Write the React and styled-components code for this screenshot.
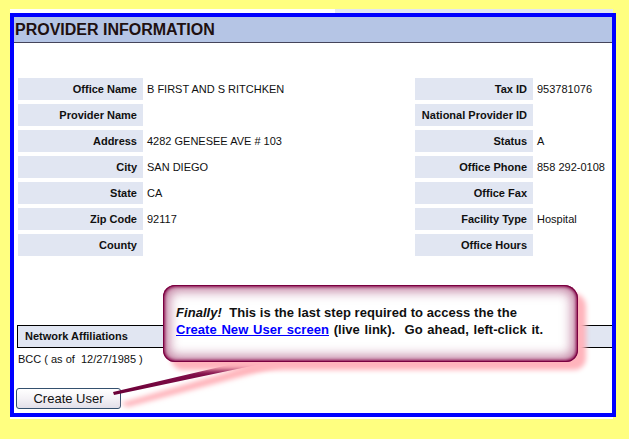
import React from "react";
import styled, { createGlobalStyle } from "styled-components";

const GlobalStyle = createGlobalStyle`
  html, body {
    margin: 0;
    padding: 0;
    background: #ffff80;
    font-family: "Liberation Sans", Arial, sans-serif;
  }
`;

const leftRows = [
  ["Office Name", "B FIRST AND S RITCHKEN"],
  ["Provider Name", ""],
  ["Address", "4282 GENESEE AVE # 103"],
  ["City", "SAN DIEGO"],
  ["State", "CA"],
  ["Zip Code", "92117"],
  ["County", ""],
];

const rightRows = [
  ["Tax ID", "953781076"],
  ["National Provider ID", ""],
  ["Status", "A"],
  ["Office Phone", "858 292-0108"],
  ["Office Fax", ""],
  ["Facility Type", "Hospital"],
  ["Office Hours", ""],
];

const App = () => {
  return (
    <>
      <GlobalStyle />
      <StPage>
        <StSheet>
          <StTopStrip />
          <StFrame>
            <StHeader>PROVIDER INFORMATION</StHeader>

            {/* --------- provider grid ---------- */}
            <StInfoGrid>
              {leftRows.map((row, i) => (
                <React.Fragment key={row[0]}>
                  <StLabel>{row[0]}</StLabel>
                  <StValue>{row[1]}</StValue>
                  <StLabel>{rightRows[i][0]}</StLabel>
                  <StValue>{rightRows[i][1]}</StValue>
                </React.Fragment>
              ))}
            </StInfoGrid>

            <StAffiliations>Network Affiliations</StAffiliations>
            <StAffText>BCC ( as of&nbsp; 12/27/1985 )</StAffText>
            <StButton>Create User</StButton>

            {/* --------- callout overlay ---------- */}
            <StTail viewBox="0 0 170 50" width="170" height="50">
              <defs>
                <filter id="blur" x="-20%" y="-50%" width="140%" height="200%">
                  <feGaussianBlur stdDeviation="2.5" />
                </filter>
                <linearGradient id="tailFill" x1="0" y1="0" x2="0" y2="1">
                  <stop offset="0" stopColor="#8e1454" />
                  <stop offset="1" stopColor="#6a0036" />
                </linearGradient>
              </defs>
              <polygon
                points="140,4 172,4 14,46 8,42"
                fill="#ffb0b8"
                filter="url(#blur)"
              />
              <polygon points="132,0 162,0 1,34 0,31" fill="url(#tailFill)" />
            </StTail>
            <StCallout>
              <StLine>
                <em>Finally!</em>&nbsp; This is the last step required to
                access the the
              </StLine>
              <StLine $wide>
                <a href="#create">Create New User screen</a> (live link).&nbsp;
                Go ahead, left-click it.
              </StLine>
            </StCallout>
          </StFrame>
        </StSheet>
      </StPage>
    </>
  );
};

const StPage = styled.div`
  width: 629px;
  height: 439px;
  padding-top: 9px;
  box-sizing: border-box;
  overflow: hidden;
`;

const StSheet = styled.div`
  width: 603px;
  height: 410px;
  margin-left: 10px;
  background: #ffffff;
`;

const StTopStrip = styled.div`
  height: 4px;
  background: linear-gradient(
    to right,
    #ffffff 0,
    #ffffff 325px,
    #e2e7f3 325px,
    #e2e7f3 100%
  );
`;

const StFrame = styled.div`
  position: relative;
  width: 598px;
  height: 396px;
  border: 4px solid #0000ff;
  background: #ffffff;
  display: flex;
  flex-direction: column;
  align-items: flex-start;
`;

const StHeader = styled.div`
  box-sizing: border-box;
  width: 100%;
  height: 26px;
  padding: 1px 0 0 1px;
  background: #b5c5e5;
  border-bottom: 1px solid #44445a;
  color: #201010;
  font-size: 16px;
  font-weight: 700;
  line-height: 23px;
`;

const StInfoGrid = styled.div`
  display: grid;
  grid-template-columns: 125px 272px 118px 79px;
  grid-auto-rows: 22px;
  row-gap: 4px;
  margin-top: 35px;
  padding-left: 4px;
  font-size: 11px;
  color: #101010;
`;

const StLabel = styled.div`
  background: #e1e6f2;
  font-weight: 700;
  text-align: right;
  padding-right: 6px;
  line-height: 22px;
`;

const StValue = styled.div`
  padding-left: 4px;
  line-height: 22px;
  white-space: nowrap;
`;

const StAffiliations = styled.div`
  box-sizing: border-box;
  width: 595px;
  height: 23px;
  margin: 69px 0 0 3px;
  padding-left: 7px;
  background: #e1e6f2;
  border: 1px solid #000000;
  border-right: none;
  font-size: 11px;
  font-weight: 700;
  line-height: 21px;
  color: #101010;
`;

const StAffText = styled.div`
  margin-left: 4px;
  font-size: 11px;
  line-height: 22px;
  color: #101010;
`;

const StButton = styled.button`
  box-sizing: border-box;
  width: 105px;
  height: 21px;
  margin: 18px 0 0 2px;
  padding: 0;
  border: 1px solid #34506e;
  border-radius: 3px;
  background: linear-gradient(to bottom, #ffffff 0%, #f4f2f6 50%, #e2dfe8 100%);
  font-family: "Liberation Sans", Arial, sans-serif;
  font-size: 13px;
  color: #101010;
  line-height: 20px;
`;

const StTail = styled.svg`
  position: absolute;
  left: 99px;
  top: 344px;
  overflow: visible;
`;

const StCallout = styled.div`
  position: absolute;
  left: 149px;
  top: 268px;
  box-sizing: border-box;
  width: 415px;
  height: 77px;
  padding: 19px 0 0 13px;
  border-radius: 12px 14px 12px 12px;
  background: #ffffff;
  box-shadow: inset 0 0 0 1px #7a0040, inset 0 0 3px 2px #8a1050,
    inset 0 0 12px 6px rgba(140, 20, 80, 0.55), 8px 8px 5px #ffb4bc;

  a {
    color: #0000ff;
    text-decoration: underline;
  }
`;

const StLine = styled.div`
  font-size: 13px;
  font-weight: 700;
  line-height: 17px;
  color: #101010;
  white-space: nowrap;
  letter-spacing: 0.05px;
  word-spacing: ${({ $wide }) => ($wide ? "1px" : "0")};
`;

export default App;
